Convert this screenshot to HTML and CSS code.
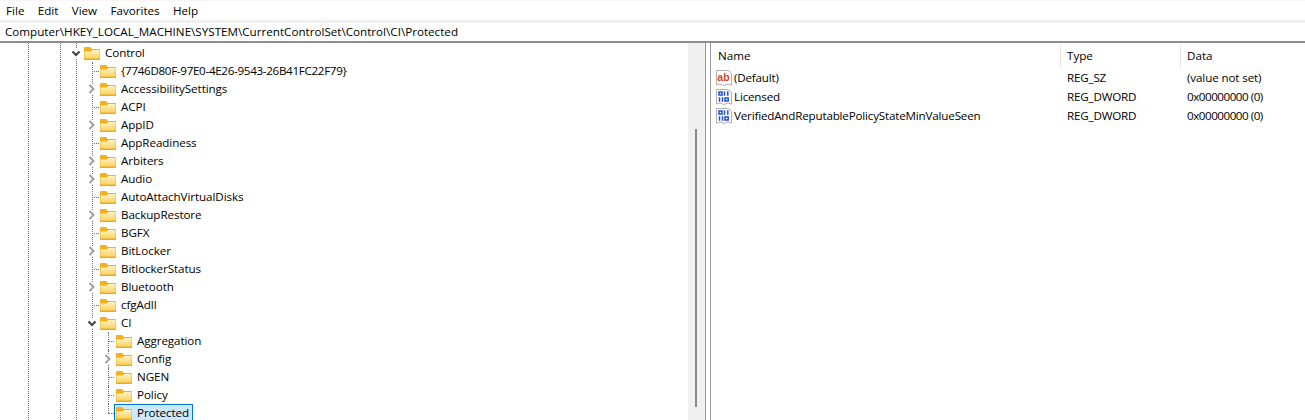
FILE: index.html
```html
<!DOCTYPE html>
<html lang="en">
<head>
<meta charset="utf-8">
<title>Registry Editor</title>
<link rel="stylesheet" href="styles.css">
</head>
<body>
<svg class="defs" width="0" height="0">
  <defs>
    <linearGradient id="fold-g" x1="0" y1="0" x2="0" y2="1">
      <stop offset="0" stop-color="#fff3c2"/>
      <stop offset="1" stop-color="#fbd266"/>
    </linearGradient>
    <symbol id="folder" viewBox="0 0 16 16">
      <path d="M0 3 Q0 2 1 2 H6 L8 4 H15 Q16 4 16 5 V14 H0 Z" fill="#f2b01e"/>
      <path d="M0.5 6.5 H6.5 L8.5 5 H15.5 V13.5 H0.5 Z" fill="url(#fold-g)"/>
      <path d="M0 14.5 H16" stroke="#e8a92a" stroke-width="1"/>
    </symbol>
    <symbol id="chev-r" viewBox="0 0 10 10"><path d="M3.5 1 L7.5 5 L3.5 9" fill="none" stroke="#a0a0a0" stroke-width="2"/></symbol>
    <symbol id="chev-d" viewBox="0 0 10 10"><path d="M2.5 3.5 L6 7 L9.5 3.5" fill="none" stroke="#404040" stroke-width="2"/></symbol>
    <symbol id="doc" viewBox="0 0 16 16">
      <path d="M0.5 0.5 H12.5 L15.5 3.5 V15 L12 14 L8 15.5 L4 14 L0.5 15 Z" fill="#fff" stroke="#b0b0b0"/>
    </symbol>
  </defs>
</svg>

<nav class="menubar">
  <span>File</span><span>Edit</span><span>View</span><span>Favorites</span><span>Help</span>
</nav>
<div class="address">Computer\HKEY_LOCAL_MACHINE\SYSTEM\CurrentControlSet\Control\CI\Protected</div>

<main class="panes">
  <section class="tree-pane">
    <div class="tree">
      <div class="guides" aria-hidden="true"><i class="g1"></i><i class="g2"></i><i class="g3"></i><i class="g4"></i></div>
      <div class="row lvl2"><svg class="tw"><use href="#chev-d"/></svg><svg class="fo"><use href="#folder"/></svg><span class="lb">Control</span></div>
      <div class="row lvl3 leaf"><span class="tw"></span><svg class="fo"><use href="#folder"/></svg><span class="lb guid">{7746D80F-97E0-4E26-9543-26B41FC22F79}</span></div>
      <div class="row lvl3"><svg class="tw"><use href="#chev-r"/></svg><svg class="fo"><use href="#folder"/></svg><span class="lb">AccessibilitySettings</span></div>
      <div class="row lvl3 leaf"><span class="tw"></span><svg class="fo"><use href="#folder"/></svg><span class="lb">ACPI</span></div>
      <div class="row lvl3"><svg class="tw"><use href="#chev-r"/></svg><svg class="fo"><use href="#folder"/></svg><span class="lb">AppID</span></div>
      <div class="row lvl3 leaf"><span class="tw"></span><svg class="fo"><use href="#folder"/></svg><span class="lb">AppReadiness</span></div>
      <div class="row lvl3"><svg class="tw"><use href="#chev-r"/></svg><svg class="fo"><use href="#folder"/></svg><span class="lb">Arbiters</span></div>
      <div class="row lvl3"><svg class="tw"><use href="#chev-r"/></svg><svg class="fo"><use href="#folder"/></svg><span class="lb">Audio</span></div>
      <div class="row lvl3 leaf"><span class="tw"></span><svg class="fo"><use href="#folder"/></svg><span class="lb">AutoAttachVirtualDisks</span></div>
      <div class="row lvl3"><svg class="tw"><use href="#chev-r"/></svg><svg class="fo"><use href="#folder"/></svg><span class="lb">BackupRestore</span></div>
      <div class="row lvl3 leaf"><span class="tw"></span><svg class="fo"><use href="#folder"/></svg><span class="lb">BGFX</span></div>
      <div class="row lvl3"><svg class="tw"><use href="#chev-r"/></svg><svg class="fo"><use href="#folder"/></svg><span class="lb">BitLocker</span></div>
      <div class="row lvl3 leaf"><span class="tw"></span><svg class="fo"><use href="#folder"/></svg><span class="lb">BitlockerStatus</span></div>
      <div class="row lvl3"><svg class="tw"><use href="#chev-r"/></svg><svg class="fo"><use href="#folder"/></svg><span class="lb">Bluetooth</span></div>
      <div class="row lvl3 leaf"><span class="tw"></span><svg class="fo"><use href="#folder"/></svg><span class="lb">cfgAdll</span></div>
      <div class="row lvl3"><svg class="tw"><use href="#chev-d"/></svg><svg class="fo"><use href="#folder"/></svg><span class="lb">CI</span></div>
      <div class="row lvl4 leaf"><span class="tw"></span><svg class="fo"><use href="#folder"/></svg><span class="lb">Aggregation</span></div>
      <div class="row lvl4"><svg class="tw"><use href="#chev-r"/></svg><svg class="fo"><use href="#folder"/></svg><span class="lb">Config</span></div>
      <div class="row lvl4 leaf"><span class="tw"></span><svg class="fo"><use href="#folder"/></svg><span class="lb">NGEN</span></div>
      <div class="row lvl4 leaf"><span class="tw"></span><svg class="fo"><use href="#folder"/></svg><span class="lb">Policy</span></div>
      <div class="row lvl4 leaf last"><span class="tw"></span><span class="selected"><svg class="fo"><use href="#folder"/></svg><span class="lb">Protected</span></span></div>
    </div>
    <div class="scrollbar"><div class="thumb"></div></div>
  </section>
  <div class="splitter"></div>
  <section class="list-pane">
    <div class="list-head">
      <div class="col-name">Name</div>
      <div class="col-type">Type</div>
      <div class="col-data">Data</div>
    </div>
    <div class="list-row">
      <div class="col-name cell">
        <svg class="val" viewBox="0 0 16 16"><use href="#doc"/><text x="7.5" y="10.5" class="ab">ab</text></svg>
        <span>(Default)</span>
      </div>
      <div class="col-type">REG_SZ</div>
      <div class="col-data">(value not set)</div>
    </div>
    <div class="list-row">
      <div class="col-name cell">
        <svg class="val" viewBox="0 0 16 16"><use href="#doc"/><path class="bin" d="M3 3h3v3H3zM8.5 2.3v4.4M11.8 2.3v4.4M3.5 8.3v4.4M6.5 8.3v4.4M9 9h3.2v3H9z"/></svg>
        <span>Licensed</span>
      </div>
      <div class="col-type">REG_DWORD</div>
      <div class="col-data hex">0x00000000 (0)</div>
    </div>
    <div class="list-row">
      <div class="col-name cell">
        <svg class="val" viewBox="0 0 16 16"><use href="#doc"/><path class="bin" d="M3 3h3v3H3zM8.5 2.3v4.4M11.8 2.3v4.4M3.5 8.3v4.4M6.5 8.3v4.4M9 9h3.2v3H9z"/></svg>
        <span>VerifiedAndReputablePolicyStateMinValueSeen</span>
      </div>
      <div class="col-type">REG_DWORD</div>
      <div class="col-data hex">0x00000000 (0)</div>
    </div>
  </section>
</main>
</body>
</html>
```
FILE: styles.css
```css
* { box-sizing: border-box; }
html, body { margin: 0; height: 100%; }
body {
  width: 1305px; height: 420px; overflow: hidden; background: #fff; color: #000;
  font-family: "Open Sans", "Noto Sans", "Liberation Sans", sans-serif;
  font-size: 11.65px; display: flex; flex-direction: column;
}
.defs { position: absolute; }
.menubar {
  height: 20px; flex: none; display: flex; gap: 13.3px; padding-left: 6px; align-items: center;
  background: #fff; white-space: nowrap; border-top: 1px solid #fbf3f6;
}
.address {
  height: 23px; flex: none; padding: 0 0 0 5px; line-height: 18px; background: #fff; white-space: nowrap;
  border-top: 3px solid #f0f0f0; border-bottom: 2px solid #8e8e8e;
}
.panes { flex: 1; display: flex; min-height: 0; }
.tree-pane { width: 705px; flex: none; display: flex; overflow: hidden; }
.tree { width: 688px; flex: none; position: relative; padding-top: 1px; overflow: hidden; }
.guides i { position: absolute; top: 0; bottom: 0; width: 0; border-left: 1px dotted #707070; }
.guides .g1 { left: 28px; }
.guides .g2 { left: 60px; }
.guides .g3 { left: 76px; }
.guides .g4 { left: 92px; top: 19px; }
.row { height: 18px; display: flex; align-items: center; position: relative; white-space: nowrap; }
.lvl2 { padding-left: 70px; }
.lvl3 { padding-left: 86px; }
.lvl4 { padding-left: 102px; }
.tw { width: 10px; height: 10px; flex: none; margin-right: 4px; position: relative; z-index: 1; }
svg.tw { background: #fff; }
.fo { width: 16px; height: 16px; flex: none; display: block; }
.lb { margin-left: 4px; padding: 0 1px; height: 18px; line-height: 17px; letter-spacing: -0.09px; }
.guid { letter-spacing: -0.32px; }
.leaf::before {
  content: ""; position: absolute; top: 50%; width: 7px; border-top: 1px dotted #707070;
}
.lvl3.leaf::before { left: 92px; }
.lvl4.leaf::before { left: 108px; width: 6px; }
.lvl4::after {
  content: ""; position: absolute; top: 0; bottom: 0; left: 108px; border-left: 1px dotted #707070;
}
.last::after { bottom: 50%; }
.selected {
  display: flex; align-items: center; height: 18px; margin-left: -2px; padding: 0 2px 0 1px;
  background: #cce8ff; border: 1px solid #0078d7; position: relative; z-index: 1;
}
.selected .lb { line-height: 16px; height: 16px; }
.scrollbar { width: 17px; flex: none; background: #f0f0f0; position: relative; padding: 86px 7px 0; }
.thumb { width: 2px; height: 278px; background: #8a8a8a; }
.splitter { width: 6px; flex: none; border-left: 1px solid #9a9a9a; border-right: 1px solid #9a9a9a; background: #fff; }
.list-pane { flex: 1; min-width: 0; padding-top: 1px; }
.list-head, .list-row { display: flex; white-space: nowrap; }
.list-head { height: 24px; line-height: 23px; }
.list-row { height: 19px; align-items: center; line-height: 17px; }
.col-name { width: 350px; padding-left: 7px; flex: none; }
.col-type { width: 120px; padding-left: 6px; flex: none; }
.col-data { flex: 1; padding-left: 6px; }
.list-row .col-type { letter-spacing: -0.2px; }
.list-row .col-data { letter-spacing: -0.13px; }
.list-row .col-data.hex { letter-spacing: -0.48px; }
.list-head .col-type, .list-head .col-data { border-left: 1px solid #e5e5e5; height: 24px; }
.list-head .col-type { margin-left: -1px; }
.cell { padding-left: 5px; display: flex; align-items: center; gap: 2px; letter-spacing: -0.19px; }
.val { width: 16px; height: 16px; flex: none; }
.ab { font: bold 10.5px "Liberation Sans", sans-serif; letter-spacing: 0; fill: #d4421e; text-anchor: middle; }
.bin { fill: none; stroke: #1f4fd8; stroke-width: 1.5; }
```
